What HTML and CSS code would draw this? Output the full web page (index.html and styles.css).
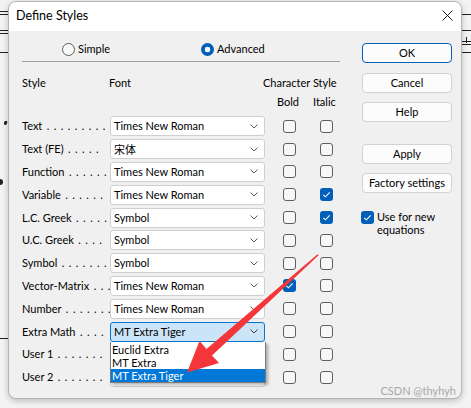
FILE: index.html
```html
<!DOCTYPE html>
<html>
<head>
<meta charset="utf-8">
<link rel="stylesheet" href="styles.css">
</head>
<body>
<div class="desk">
  <div class="bgline l1"></div><div class="bgline l2"></div><div class="bgline l3"></div><div class="bgline l4"></div><div class="bgline l5"></div><div class="bgline l6"></div>
  <div class="bgline r1"></div><div class="bgline r2"></div><div class="bgline r3"></div><div class="bgline r4"></div><div class="bgline r5"></div><div class="bgtick"></div>
  <div class="bgmark m1"></div><div class="bgmark m2"></div>

  <div class="dialog">
    <div class="titlebar">
      <span class="title">Define Styles</span>
      <svg class="close" width="11" height="11" viewBox="0 0 11 11"><path d="M0.5 0.5 L10.5 10.5 M10.5 0.5 L0.5 10.5" stroke="#1a1a1a" stroke-width="1" fill="none"/></svg>
    </div>
    <div class="dbody">
      <div class="main">
        <div class="mode">
          <div class="radio-opt"><span class="radio"></span><span>Simple</span></div>
          <div class="radio-opt"><span class="radio on"></span><span>Advanced</span></div>
        </div>
        <div class="sep"></div>
        <div class="head"><span class="h-style">Style</span><span class="h-font">Font</span><span>Character Style</span></div>
        <div class="subhead"><span class="h-bold">Bold</span><span>Italic</span></div>
        <div class="rows">
          <div class="lbl">Text<span class="dots"> . . . . . . . . .</span></div>
          <div class="combo"><span>Times New Roman</span><svg class="chev" width="8" height="5" viewBox="0 0 8 5"><path d="M0.5 0.5 L4 4 L7.5 0.5" stroke="#5a5a5a" fill="none"/></svg></div>
          <span class="cb"></span><span class="cb"></span>

          <div class="lbl">Text (FE)<span class="dots"> . . . . .</span></div>
          <div class="combo"><span class="cjk">宋体</span><svg class="chev" width="8" height="5" viewBox="0 0 8 5"><path d="M0.5 0.5 L4 4 L7.5 0.5" stroke="#5a5a5a" fill="none"/></svg></div>
          <span class="cb"></span><span class="cb"></span>

          <div class="lbl">Function<span class="dots"> . . . . . .</span></div>
          <div class="combo"><span>Times New Roman</span><svg class="chev" width="8" height="5" viewBox="0 0 8 5"><path d="M0.5 0.5 L4 4 L7.5 0.5" stroke="#5a5a5a" fill="none"/></svg></div>
          <span class="cb"></span><span class="cb"></span>

          <div class="lbl">Variable<span class="dots"> . . . . . .</span></div>
          <div class="combo"><span>Times New Roman</span><svg class="chev" width="8" height="5" viewBox="0 0 8 5"><path d="M0.5 0.5 L4 4 L7.5 0.5" stroke="#5a5a5a" fill="none"/></svg></div>
          <span class="cb"></span><span class="cb on"><svg width="13" height="13" viewBox="0 0 13 13"><path d="M3.3 6.8 L5.4 8.8 L9.7 4.3" stroke="#fff" stroke-width="1.1" fill="none"/></svg></span>

          <div class="lbl">L.C. Greek<span class="dots"> . . . . .</span></div>
          <div class="combo"><span>Symbol</span><svg class="chev" width="8" height="5" viewBox="0 0 8 5"><path d="M0.5 0.5 L4 4 L7.5 0.5" stroke="#5a5a5a" fill="none"/></svg></div>
          <span class="cb"></span><span class="cb on"><svg width="13" height="13" viewBox="0 0 13 13"><path d="M3.3 6.8 L5.4 8.8 L9.7 4.3" stroke="#fff" stroke-width="1.1" fill="none"/></svg></span>

          <div class="lbl">U.C. Greek<span class="dots"> . . . .</span></div>
          <div class="combo"><span>Symbol</span><svg class="chev" width="8" height="5" viewBox="0 0 8 5"><path d="M0.5 0.5 L4 4 L7.5 0.5" stroke="#5a5a5a" fill="none"/></svg></div>
          <span class="cb"></span><span class="cb"></span>

          <div class="lbl">Symbol<span class="dots"> . . . . . . .</span></div>
          <div class="combo"><span>Symbol</span><svg class="chev" width="8" height="5" viewBox="0 0 8 5"><path d="M0.5 0.5 L4 4 L7.5 0.5" stroke="#5a5a5a" fill="none"/></svg></div>
          <span class="cb"></span><span class="cb"></span>

          <div class="lbl">Vector-Matrix<span class="dots"> . . .</span></div>
          <div class="combo"><span>Times New Roman</span><svg class="chev" width="8" height="5" viewBox="0 0 8 5"><path d="M0.5 0.5 L4 4 L7.5 0.5" stroke="#5a5a5a" fill="none"/></svg></div>
          <span class="cb on"><svg width="13" height="13" viewBox="0 0 13 13"><path d="M3.3 6.8 L5.4 8.8 L9.7 4.3" stroke="#fff" stroke-width="1.1" fill="none"/></svg></span><span class="cb"></span>

          <div class="lbl">Number<span class="dots"> . . . . . . .</span></div>
          <div class="combo"><span>Times New Roman</span><svg class="chev" width="8" height="5" viewBox="0 0 8 5"><path d="M0.5 0.5 L4 4 L7.5 0.5" stroke="#5a5a5a" fill="none"/></svg></div>
          <span class="cb"></span><span class="cb"></span>

          <div class="lbl">Extra Math<span class="dots"> . . . .</span></div>
          <div class="combo open"><span>MT Extra Tiger</span><svg class="chev" width="8" height="5" viewBox="0 0 8 5"><path d="M0.5 0.5 L4 4 L7.5 0.5" stroke="#3a3a3a" fill="none"/></svg>
            <div class="dropdown">
              <div class="opt">Euclid Extra</div>
              <div class="opt">MT Extra</div>
              <div class="opt sel">MT Extra Tiger</div>
            </div>
          </div>
          <span class="cb"></span><span class="cb"></span>

          <div class="lbl">User 1<span class="dots"> . . . . . . .</span></div>
          <div class="combo"><span></span></div>
          <span class="cb"></span><span class="cb"></span>

          <div class="lbl">User 2<span class="dots"> . . . . . . .</span></div>
          <div class="combo"><span></span></div>
          <span class="cb"></span><span class="cb"></span>
        </div>
      </div>
      <div class="side">
        <div class="btn default">OK</div>
        <div class="btn b-cancel">Cancel</div>
        <div class="btn b-help">Help</div>
        <div class="btn b-apply">Apply</div>
        <div class="btn b-factory">Factory settings</div>
        <div class="usenew">
          <span class="cb on"><svg width="13" height="13" viewBox="0 0 13 13"><path d="M3.3 6.8 L5.4 8.8 L9.7 4.3" stroke="#fff" stroke-width="1.1" fill="none"/></svg></span>
          <span class="usetext">Use for new<br>equations</span>
        </div>
      </div>
    </div>
    <div class="watermark">CSDN @thyhyh</div>
  </div>

  <svg class="arrow" width="471" height="408" viewBox="0 0 471 408">
    <polygon points="318.6,255.3 212,355.5 219,363 187,372.5 199.5,341 206.5,349 317.6,254.3" fill="#f2363a"/>
  </svg>
</div>
</body>
</html>
```

FILE: styles.css
```css
html, body {
  margin: 0;
  padding: 0;
}
body {
  background: #f3f3f3;
  font-family: Lato, "Noto Sans", "Noto Sans CJK SC", sans-serif;
  font-size: 11px;
  color: #000;
}
.desk {
  position: relative;
  width: 471px;
  height: 408px;
  overflow: hidden;
  box-sizing: border-box;
  padding: 1px 0 0 8px;
}

/* background document remnants */
.bgline {
  position: absolute;
  height: 1px;
  background: #222;
}
.l1 { left: 0; width: 8px; top: 11px; }
.l2 { left: 0; width: 8px; top: 14px; }
.l3 { left: 0; width: 8px; top: 30px; }
.l4 { left: 0; width: 8px; top: 33px; }
.l5 { left: 0; width: 8px; top: 52px; }
.l6 { left: 0; width: 8px; top: 338px; }
.r1 { left: 462px; width: 9px; top: 14px; }
.r2 { left: 462px; width: 9px; top: 30px; }
.r3 { left: 462px; width: 9px; top: 41px; }
.r4 { left: 462px; width: 9px; top: 44px; }
.r5 { left: 462px; width: 9px; top: 52px; }
.bgtick {
  position: absolute;
  left: 466px;
  top: 37px;
  width: 1px;
  height: 6px;
  background: #222;
}
.bgmark {
  position: absolute;
  background: #222;
}
.m1 {
  left: 4px;
  top: 121px;
  width: 3px;
  height: 4px;
  border-radius: 1px 1px 1px 2px;
  transform: skewX(-15deg);
}
.m2 {
  left: 0;
  top: 179px;
  width: 3px;
  height: 6px;
  border-radius: 0 3px 3px 0;
}

/* dialog */
.dialog {
  position: relative;
  width: 454px;
  height: 398px;
  box-sizing: border-box;
  border: 1px solid #b4b4b4;
  border-radius: 8px;
  background: #f0f0f0;
  overflow: hidden;
  box-shadow: 0 2px 6px rgba(0, 0, 0, 0.22);
}
.titlebar {
  height: 29px;
  box-sizing: border-box;
  background: #fff;
  display: flex;
  justify-content: space-between;
  align-items: flex-start;
  padding: 6px 8px 0 7px;
}
.title {
  font-size: 12.5px;
  line-height: 16px;
}
.close {
  margin-top: 2px;
  display: block;
}
.dbody {
  display: flex;
  padding-left: 13px;
}
.main {
  width: 318px;
  padding-top: 11px;
}
.mode {
  display: flex;
  height: 14px;
  line-height: 14px;
  padding-left: 40px;
}
.radio-opt {
  display: flex;
  align-items: center;
  gap: 3px;
  width: 141px;
}
.radio {
  width: 13px;
  height: 13px;
  box-sizing: border-box;
  border: 1px solid #5c5c5c;
  border-radius: 50%;
  background: #f9f9f9;
}
.radio.on {
  border: none;
  background: radial-gradient(circle, #fff 0 2.6px, #005fb8 3.1px);
}
.sep {
  margin-top: 5px;
  height: 1px;
  background: #a0a0a0;
}
.head {
  margin-top: 14px;
  display: flex;
  line-height: 14px;
}
.h-style { width: 87px; }
.h-font { width: 154px; }
.subhead {
  margin-top: 5px;
  display: flex;
  line-height: 14px;
  padding-left: 255px;
}
.h-bold { width: 36px; }

.rows {
  margin-top: 6px;
  display: grid;
  grid-template-columns: 88px 155px 31px 37px;
  grid-auto-rows: 22.8px;
  align-items: center;
}
.lbl {
  white-space: pre;
  overflow: hidden;
  line-height: 14px;
}
.dots {
  word-spacing: 1.6px;
}
.combo {
  height: 20px;
  box-sizing: border-box;
  border: 1px solid #cfcfcf;
  border-radius: 3px;
  background: #fff;
  display: flex;
  align-items: center;
  justify-content: space-between;
  padding: 0 6px 0 3px;
  line-height: 14px;
}
.cjk {
  font-family: "Noto Sans CJK SC", sans-serif;
  font-size: 11px;
}
.chev { display: block; }
.combo.open {
  position: relative;
  background: #cce4f7;
  border-color: #0078d4;
}
.dropdown {
  position: absolute;
  left: -1px;
  top: calc(100% + 1px);
  width: 156px;
  box-sizing: border-box;
  background: #fff;
  border: 1px solid #7a7a7a;
  border-top: none;
  padding-top: 1px;
  box-shadow: 2px 2px 3px rgba(0, 0, 0, 0.3);
  z-index: 2;
}
.opt {
  height: 13px;
  line-height: 13px;
  padding-left: 1px;
}
.opt.sel {
  background: #0078d7;
  color: #fff;
}
.cb {
  justify-self: end;
  width: 13px;
  height: 13px;
  box-sizing: border-box;
  border: 1px solid #5f5f5f;
  border-radius: 3px;
  background: #f7f7f7;
  display: block;
}
.cb.on {
  border: none;
  background: #005fb8;
}
.cb svg { display: block; }

/* right column */
.side {
  margin-left: 22px;
  width: 90px;
  padding-top: 12px;
  display: flex;
  flex-direction: column;
}
.btn {
  height: 20px;
  box-sizing: border-box;
  border: 1px solid #d2d2d2;
  border-radius: 4px;
  background: #fcfcfc;
  display: flex;
  align-items: center;
  justify-content: center;
  line-height: 14px;
}
.btn.default { border-color: #005fb8; }
.b-cancel { margin-top: 10px; }
.b-help { margin-top: 9px; }
.b-apply { margin-top: 22px; }
.b-factory { margin-top: 9px; }
.usenew {
  margin-top: 18px;
  margin-left: -1px;
  display: flex;
  align-items: flex-start;
  gap: 3px;
}
.usetext {
  line-height: 13px;
  margin-top: -1px;
}
.watermark {
  position: absolute;
  right: 5px;
  bottom: 1px;
  color: #a8a8a8;
  font-size: 11px;
  line-height: 13px;
}
.arrow {
  position: absolute;
  left: 0;
  top: 0;
  z-index: 5;
  pointer-events: none;
}
```
